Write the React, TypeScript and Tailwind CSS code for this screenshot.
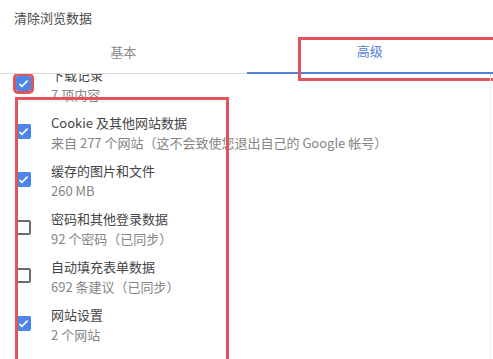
const items = [
  { title: "下载记录", sub: "7 项内容", checked: true, marked: true },
  { title: "Cookie 及其他网站数据", sub: "来自 277 个网站（这不会致使您退出自己的 Google 帐号）", checked: true },
  { title: "缓存的图片和文件", sub: "260 MB", checked: true },
  { title: "密码和其他登录数据", sub: "92 个密码（已同步）", checked: false },
  { title: "自动填充表单数据", sub: "692 条建议（已同步）", checked: false },
  { title: "网站设置", sub: "2 个网站", checked: true },
  { title: "托管应用数据", sub: "", checked: false },
];

const Box = ({ checked, marked }: { checked: boolean; marked?: boolean }) => (
  <div
    className={`flex h-[15px] w-[15px] shrink-0 items-center justify-center rounded-[2px] ${
      checked ? "bg-[#4a86e8]" : "border-2 border-[#6b6b6b]"
    } ${marked ? "outline-[3px] outline-solid outline-[#e0555b]" : ""}`}
  >
    {checked && (
      <svg viewBox="0 0 16 16" className="h-[13px] w-[13px]">
        <path d="M3 8.5l3 3 7-7" fill="none" stroke="white" strokeWidth="2" />
      </svg>
    )}
  </div>
);

export default function App() {
  return (
    <div
      className="relative h-[359px] w-[493px] overflow-hidden bg-white"
      style={{ fontFamily: '"Noto Sans CJK SC", "Noto Sans", sans-serif' }}
    >
      <div className="h-[36px] pl-[14px] pt-[8px] text-[13px] leading-[20px] text-[#4a4a4a]">清除浏览数据</div>

      <div className="flex h-[38px] text-[13px]">
        <div className="flex flex-1 items-center justify-center border-b border-[#dcdcdc] pb-[6px] text-[#8a8a8a]">基本</div>
        <div className="relative flex flex-1 items-center justify-center border-b-2 border-[#5383d6] pb-[6px] text-[#4f82d6]">
          高级
          <div className="absolute left-[51px] right-0 top-[1px] h-[44px] border-[3px] border-r-0 border-[#e0555b]" />
        </div>
      </div>

      <div className="relative mr-[2px] h-[285px] overflow-hidden border-r border-[#ececec]">
        <div className="-mt-[13px]">
          {items.map((it) => (
            <div key={it.title} className="flex h-[48px] items-center pl-[16px]">
              <div className="mb-[3px]">
                <Box checked={it.checked} marked={it.marked} />
              </div>
              <div className="ml-[20px] text-[13px] leading-[20px]">
                <div className="whitespace-nowrap text-[#444]">{it.title}</div>
                <div className="whitespace-nowrap text-[#858585]">{it.sub}</div>
              </div>
            </div>
          ))}
        </div>
        <div className="absolute left-[15px] top-[23px] h-[300px] w-[214px] border-[3px] border-[#e0555b]" />
      </div>
    </div>
  );
}
